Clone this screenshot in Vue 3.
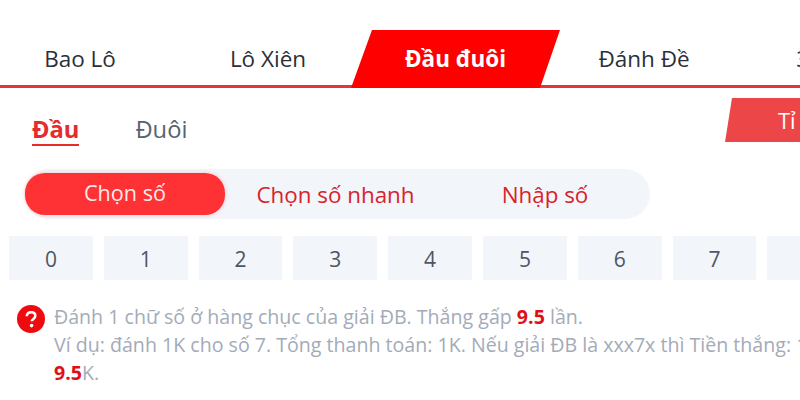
<script setup>
const tabs = ['Bao Lô', 'Lô Xiên', 'Đầu đuôi', 'Đánh Đề', '3 Càng']
const modes = ['Chọn số', 'Chọn số nhanh', 'Nhập số']
const digits = [0, 1, 2, 3, 4, 5, 6, 7, 8]
</script>

<template>
  <div class="page">
    <nav class="tabs">
      <div v-for="(t, i) in tabs" :key="t" class="tab" :class="{ active: i === 2 }">
        <span>{{ t }}</span>
      </div>
    </nav>

    <div class="sub">
      <div class="sub-left">
        <span class="sub-item on">Đầu</span>
        <span class="sub-item">Đuôi</span>
      </div>
      <div class="rate"><span>Tỉ lệ</span></div>
    </div>

    <div class="modes">
      <div v-for="(m, i) in modes" :key="m" class="mode" :class="{ on: i === 0 }">{{ m }}</div>
    </div>

    <div class="digits">
      <div v-for="d in digits" :key="d" class="digit">{{ d }}</div>
    </div>

    <div class="note">
      <svg class="help" viewBox="0 0 28 28" width="28" height="28">
        <circle cx="14" cy="14" r="14" fill="#ee0a0f" />
        <path d="M9.800 11.200c0-2.500 1.900-4 4.300-4s4.200 1.400 4.200 3.600c0 1.700-1 2.600-2.100 3.400-1 .7-1.400 1.100-1.400 2.100" fill="none" stroke="#fff" stroke-width="2.600" />
        <circle cx="14.600" cy="20.600" r="1.800" fill="#fff" />
      </svg>
      <div class="note-text">
        <div>Đánh 1 chữ số ở hàng chục của giải ĐB. Thắng gấp <b>9.5</b> lần.</div>
        <div class="nowrap">Ví dụ: đánh 1K cho số 7. Tổng thanh toán: 1K. Nếu giải ĐB là xxx7x thì Tiền thắng: 1K x</div>
        <div><b>9.5</b>K.</div>
      </div>
    </div>
  </div>
</template>

<style scoped>
.page {
  width: 800px;
  height: 400px;
  overflow: hidden;
  background: #fff;
  font-family: "Open Sans", "Noto Sans", sans-serif;
  position: relative;
}
.tabs {
  display: flex;
  margin-top: 30px;
  height: 58px;
  border-bottom: 3px solid #e5343a;
  box-sizing: border-box;
  width: 960px;
}
.tab {
  width: 188px;
  flex: none;
  display: flex;
  align-items: center;
  justify-content: center;
  font-size: 22.5px;
  color: #2b2f38;
  height: 58px;
  padding-bottom: 1px;
  box-sizing: border-box;
}
.tab:first-child {
  margin-left: -14px;
}
.tab.active {
  width: 209px;
  margin: 0 -10px 0 -11px;
  background: #fe0000;
  color: #fff;
  font-weight: 700;
  clip-path: polygon(21px 0, 100% 0, 189px 100%, 0 100%);
}
.sub {
  display: flex;
  justify-content: space-between;
  height: 54px;
  margin-top: 10px;
}
.sub-left {
  display: flex;
  gap: 56px;
  padding-left: 32px;
  margin-top: 16px;
  align-items: flex-start;
}
.sub-item {
  font-size: 23.7px;
  line-height: 30px;
  height: 30px;
  color: #5a626e;
}
.sub-item.on {
  color: #e52b2e;
  font-weight: 700;
  border-bottom: 2px solid #e52b2e;
}
.rate {
  width: 75px;
  height: 44px;
  background: #ec4649;
  clip-path: polygon(7px 0, 100% 0, 100% 100%, 0 100%);
  color: #fff;
  font-size: 22px;
  line-height: 44px;
  padding-left: 53px;
  box-sizing: border-box;
  white-space: nowrap;
  overflow: hidden;
}
.modes {
  margin: 17px 0 0 24px;
  width: 626px;
  height: 50px;
  background: #f2f5fa;
  border-radius: 25px;
  display: flex;
  align-items: center;
}
.mode {
  font-size: 22.4px;
  color: #d8232a;
  text-align: center;
}
.mode:nth-child(1) {
  width: 200px;
  height: 42px;
  line-height: 40px;
  font-size: 21.6px;
  margin-left: 1px;
}
.mode:nth-child(2) {
  width: 221px;
}
.mode:nth-child(3) {
  width: 190px;
  margin-left: 4px;
}
.mode.on {
  background: #fe3135;
  color: #fde9e7;
  border-radius: 20px;
  box-shadow: 0 0 4px rgba(254, 49, 53, 0.25);
}
.digits {
  display: flex;
  gap: 11px;
  margin: 17px 0 0 9px;
  width: 860px;
}
.digit {
  width: 83.800px;
  height: 44px;
  flex: none;
  background: #f2f5fa;
  color: #4f5663;
  font-size: 21px;
  line-height: 46px;
  text-align: center;
}
.note {
  display: flex;
  gap: 9px;
  margin: 23px 0 0 17px;
  width: 900px;
}
.help {
  flex: none;
  margin-top: 2px;
}
.note-text {
  font-size: 19.6px;
  line-height: 28px;
  color: #a3abb8;
}
.note-text b {
  color: #df0f18;
  font-weight: 700;
}
.nowrap {
  white-space: nowrap;
}
</style>
